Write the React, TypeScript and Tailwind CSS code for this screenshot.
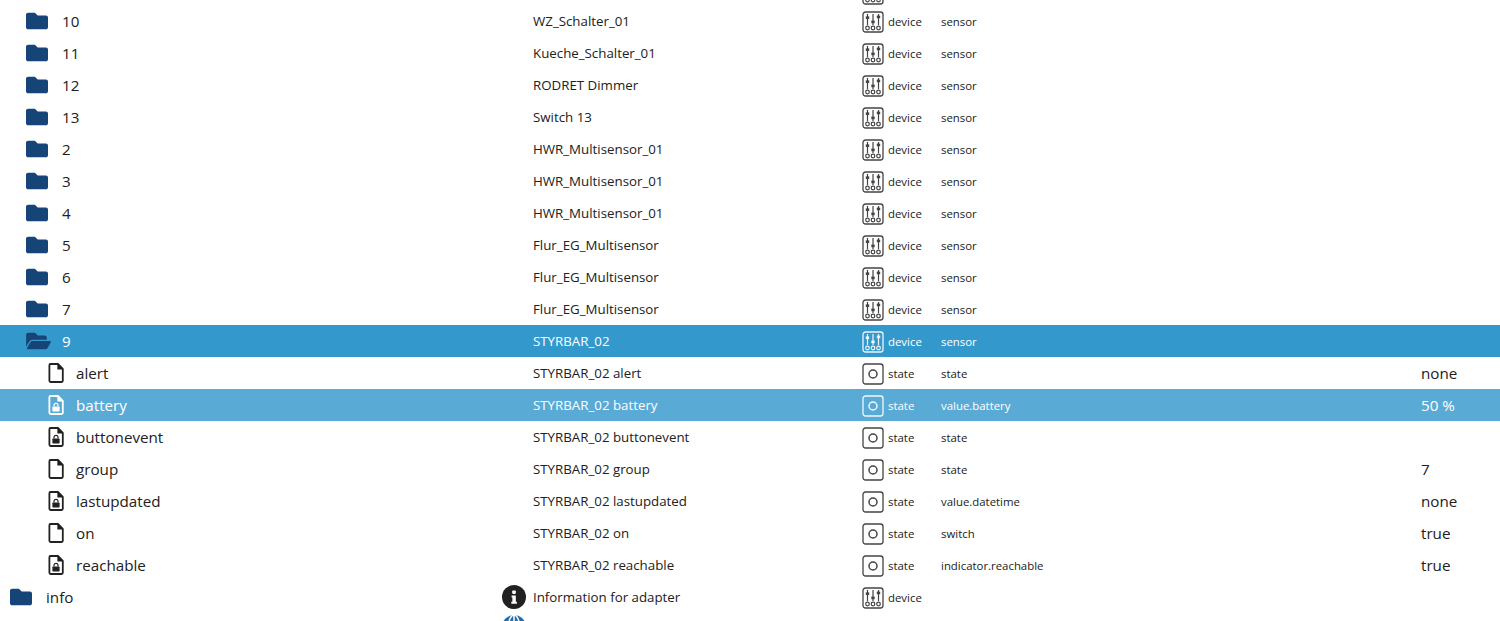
import { FaFolder, FaFolderOpen } from 'react-icons/fa'

type Row = {
  id: string
  name: string
  type: 'device' | 'state'
  role?: string
  value?: string
  depth: 0 | 1 | 2
  locked?: boolean
  state?: 'open' | 'selected'
}

const sensor = (id: string, name: string): Row => ({ id, name, type: 'device', role: 'sensor', depth: 1 })

const rows: Row[] = [
  sensor('10', 'WZ_Schalter_01'),
  sensor('11', 'Kueche_Schalter_01'),
  sensor('12', 'RODRET Dimmer'),
  sensor('13', 'Switch 13'),
  sensor('2', 'HWR_Multisensor_01'),
  sensor('3', 'HWR_Multisensor_01'),
  sensor('4', 'HWR_Multisensor_01'),
  sensor('5', 'Flur_EG_Multisensor'),
  sensor('6', 'Flur_EG_Multisensor'),
  sensor('7', 'Flur_EG_Multisensor'),
  { id: '9', name: 'STYRBAR_02', type: 'device', role: 'sensor', depth: 1, state: 'open' },
  { id: 'alert', name: 'STYRBAR_02 alert', type: 'state', role: 'state', value: 'none', depth: 2 },
  { id: 'battery', name: 'STYRBAR_02 battery', type: 'state', role: 'value.battery', value: '50 %', depth: 2, locked: true, state: 'selected' },
  { id: 'buttonevent', name: 'STYRBAR_02 buttonevent', type: 'state', role: 'state', depth: 2, locked: true },
  { id: 'group', name: 'STYRBAR_02 group', type: 'state', role: 'state', value: '7', depth: 2 },
  { id: 'lastupdated', name: 'STYRBAR_02 lastupdated', type: 'state', role: 'value.datetime', value: 'none', depth: 2, locked: true },
  { id: 'on', name: 'STYRBAR_02 on', type: 'state', role: 'switch', value: 'true', depth: 2 },
  { id: 'reachable', name: 'STYRBAR_02 reachable', type: 'state', role: 'indicator.reachable', value: 'true', depth: 2, locked: true },
  { id: 'info', name: 'Information for adapter', type: 'device', depth: 0 },
]

function FileIcon({ locked }: { locked?: boolean }) {
  return (
    <svg viewBox="0 0 16 20" className="w-[16px] h-[20px] fill-none stroke-current">
      <path d="M2.5 1h7.5l4.8 4.8v12a1.2 1.2 0 0 1-1.2 1.2h-11a1.2 1.2 0 0 1-1.2-1.2v-15.6a1.2 1.2 0 0 1 1.1-1.2z" strokeWidth="1.8" strokeLinejoin="round" />
      <path d="M9.6 1v5.2h5.2z" fill="currentColor" strokeWidth="0.5" />
      {locked && (
        <g>
          <path d="M6 11.5v-1.2a2 2 0 0 1 4 0v1.2" strokeWidth="1.2" />
          <rect x="4.4" y="11.4" width="7.2" height="5.2" rx="0.8" fill="currentColor" stroke="none" />
        </g>
      )}
    </svg>
  )
}

function DeviceIcon() {
  return (
    <svg viewBox="0 0 22 22" className="w-[22px] h-[22px] fill-none stroke-current">
      <rect x="1" y="1" width="20" height="20" rx="2.5" strokeWidth="1.3" />
      <path d="M5.5 3v11M11 3v11M16.5 3v11" strokeWidth="1.2" />
      <rect x="3.8" y="5.4" width="3.4" height="2.6" fill="currentColor" stroke="none" />
      <rect x="9.3" y="9.6" width="3.4" height="2.6" fill="currentColor" stroke="none" />
      <rect x="14.8" y="4.6" width="3.4" height="2.6" fill="currentColor" stroke="none" />
      <circle cx="5.5" cy="17" r="1.8" strokeWidth="1.2" />
      <circle cx="11" cy="17" r="1.8" strokeWidth="1.2" />
      <circle cx="16.5" cy="17" r="1.8" strokeWidth="1.2" />
    </svg>
  )
}

function StateIcon() {
  return (
    <svg viewBox="0 0 22 22" className="w-[22px] h-[22px] fill-none stroke-current">
      <rect x="1" y="1" width="20" height="20" rx="2.5" strokeWidth="1.3" />
      <circle cx="11" cy="11" r="4" strokeWidth="1.5" />
    </svg>
  )
}

function InfoIcon() {
  return (
    <svg viewBox="0 0 24 24" className="w-[24px] h-[24px]">
      <circle cx="12" cy="12" r="12" fill="#212121" />
      <rect x="10.2" y="5.5" width="3.6" height="3.4" rx="0.8" fill="#fff" />
      <path d="M9.6 10.4h4.2v6.4h1.1v2h-5.6v-2h1.1v-4.4h-0.8z" fill="#fff" />
    </svg>
  )
}

function GlobeIcon() {
  return (
    <svg viewBox="0 0 24 24" className="w-[24px] h-[24px]">
      <circle cx="12" cy="12" r="12" fill="#1f6fb0" />
      <path d="M12 0v24M0 12h24" stroke="#fff" strokeWidth="1.5" />
      <ellipse cx="12" cy="12" rx="5.5" ry="12" fill="none" stroke="#fff" strokeWidth="1.5" />
    </svg>
  )
}

function TableRow({ row }: { row: Row }) {
  const bg =
    row.state === 'open' ? 'bg-[#3399cc] text-white' : row.state === 'selected' ? 'bg-[#5aaad6] text-white' : 'text-[#212121]'
  const indent = row.depth === 0 ? 'pl-[10px]' : row.depth === 1 ? 'pl-[26px]' : 'pl-[48px]'
  const gap = row.depth === 2 ? 'gap-[12px]' : row.state === 'open' ? 'gap-[11px]' : 'gap-[14px]'

  return (
    <div className={`flex h-[32px] items-center ${bg}`}>
      <div className={`flex w-[502px] shrink-0 items-center ${indent} ${gap}`}>
        {row.depth === 2 ? (
          <FileIcon locked={row.locked} />
        ) : row.state === 'open' ? (
          <FaFolderOpen className="w-[25px] h-[22px] text-[#164477]" />
        ) : (
          <FaFolder className="w-[22px] h-[22px] text-[#164477]" />
        )}
        <span className="text-[15.2px]">{row.id}</span>
      </div>
      <div className="w-[31px] shrink-0">{row.id === 'info' && <InfoIcon />}</div>
      <div className="w-[329px] shrink-0 pt-[1px] text-[13.3px]">{row.name}</div>
      <div className="flex w-[79px] shrink-0 items-center gap-[4px] pt-[1px] text-[11.4px]">
        <span className={row.state ? 'text-white/90' : 'text-[#444]'}>
          {row.type === 'device' ? <DeviceIcon /> : <StateIcon />}
        </span>
        {row.type}
      </div>
      <div className="w-[480px] shrink-0 pt-[1px] text-[11.4px]">{row.role}</div>
      <div className="text-[15.2px]">{row.value}</div>
    </div>
  )
}

export default function App() {
  return (
    <div className="h-[621px] w-[1500px] overflow-hidden bg-white font-['Open_Sans','Noto_Sans',sans-serif]">
      <div className="flex h-[5px] items-end overflow-hidden pl-[862px] text-[#444]">
        <span className="shrink-0">
          <DeviceIcon />
        </span>
      </div>
      {rows.map((row) => (
        <TableRow key={row.id} row={row} />
      ))}
      <div className="flex h-[8px] items-start overflow-hidden pl-[502px] pt-[2px]">
        <GlobeIcon />
      </div>
    </div>
  )
}
